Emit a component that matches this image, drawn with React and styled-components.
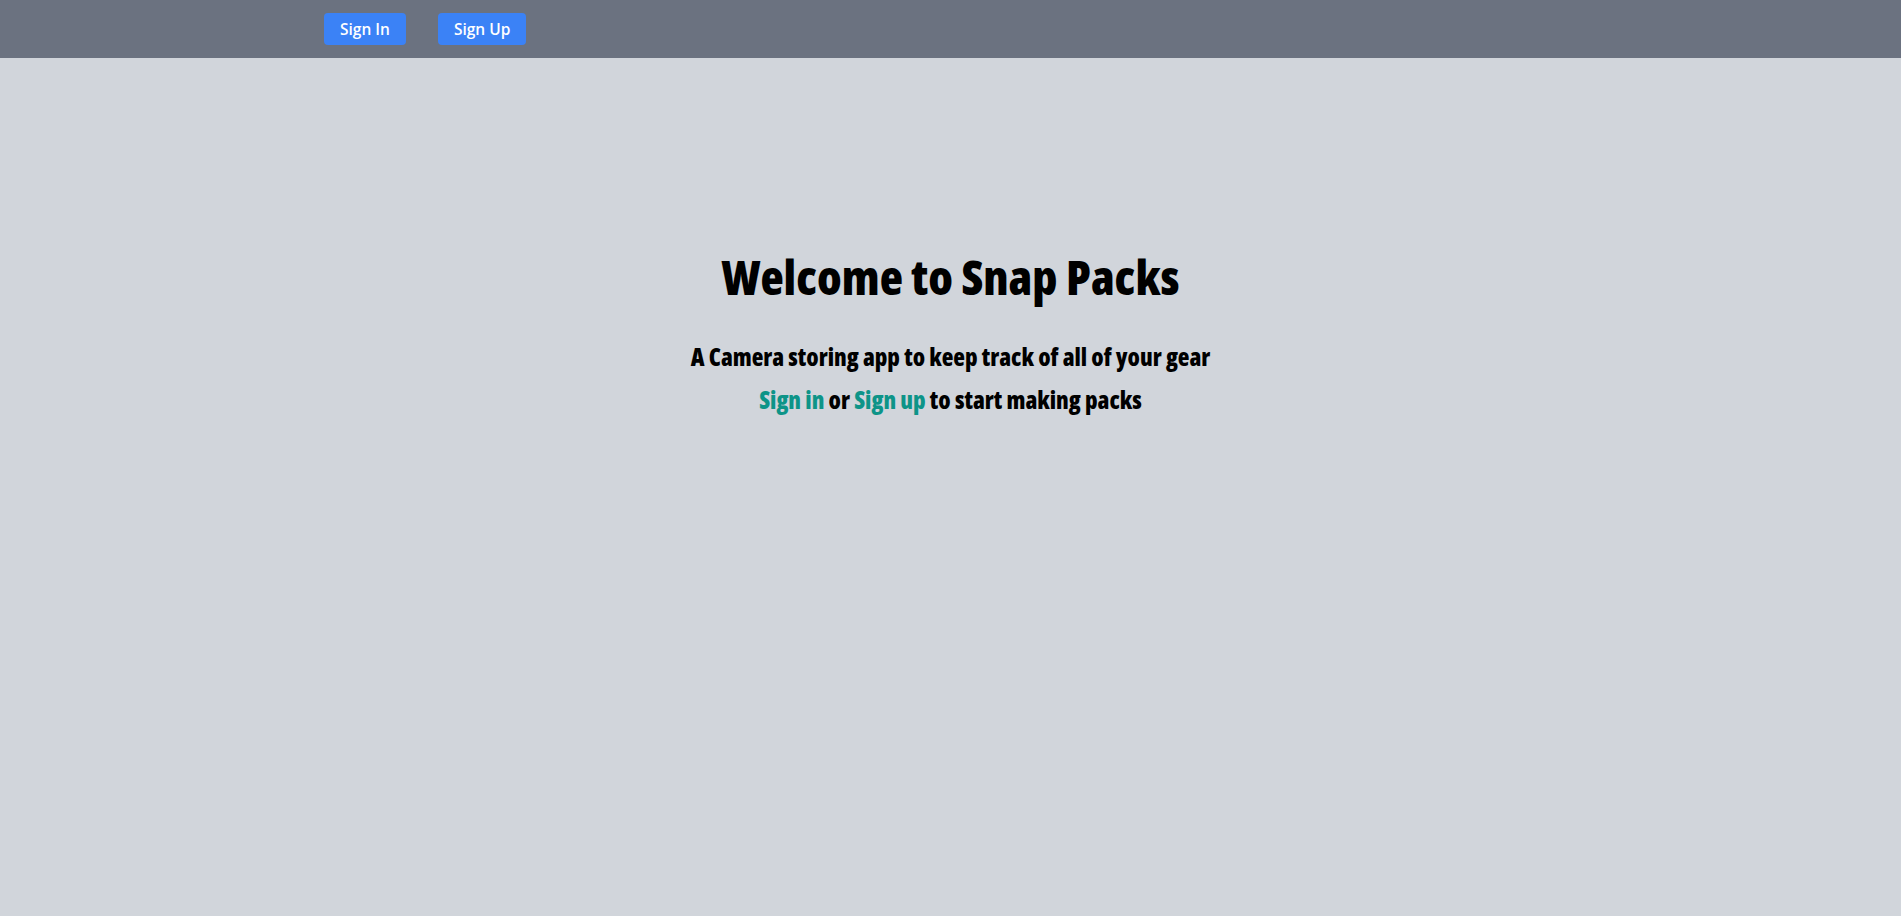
import React from "react";
import styled, { createGlobalStyle } from "styled-components";

const GlobalStyle = createGlobalStyle`
  html, body {
    margin: 0;
    padding: 0;
    background: #d1d5db;
  }
  body {
    font-family: "Open Sans", "Noto Sans", sans-serif;
  }
  #root {
    min-height: 100vh;
    display: flex;
    flex-direction: column;
  }
`;

const Header = styled.header`
  height: 58px;
  background: #6b7280;
  display: flex;
  align-items: center;
  gap: 32px;
  padding-left: 324px;
  box-sizing: border-box;
`;

const NavButton = styled.button`
  height: 32px;
  padding: 0 16px;
  border: none;
  border-radius: 4px;
  background: #3b82f6;
  color: #ffffff;
  font-family: "Open Sans", "Noto Sans", sans-serif;
  font-size: 15.5px;
  font-weight: 600;
  cursor: pointer;
`;

const Main = styled.main`
  flex: 1;
  display: flex;
  flex-direction: column;
  align-items: center;
  padding: 189px 0 0;
  font-family: "Open Sans", "Roboto", sans-serif;
  font-stretch: 75%;
  font-weight: 800;
  color: #000000;
`;

const Title = styled.h1`
  margin: 0 0 34px;
  font-size: 48px;
  line-height: 60px;
  font-weight: 800;
`;

const Line = styled.p`
  margin: 0 0 11px;
  font-size: 24px;
  line-height: 32px;
`;

const TextLink = styled.a`
  color: #0d9488;
  text-decoration: none;
  cursor: pointer;
`;

export default function App() {
  return (
    <>
      <GlobalStyle />
      <Header>
        <NavButton>Sign In</NavButton>
        <NavButton>Sign Up</NavButton>
      </Header>
      <Main>
        <Title>Welcome to Snap Packs</Title>
        <Line>A Camera storing app to keep track of all of your gear</Line>
        <Line>
          <TextLink>Sign in</TextLink> or <TextLink>Sign up</TextLink> to start making packs
        </Line>
      </Main>
    </>
  );
}
